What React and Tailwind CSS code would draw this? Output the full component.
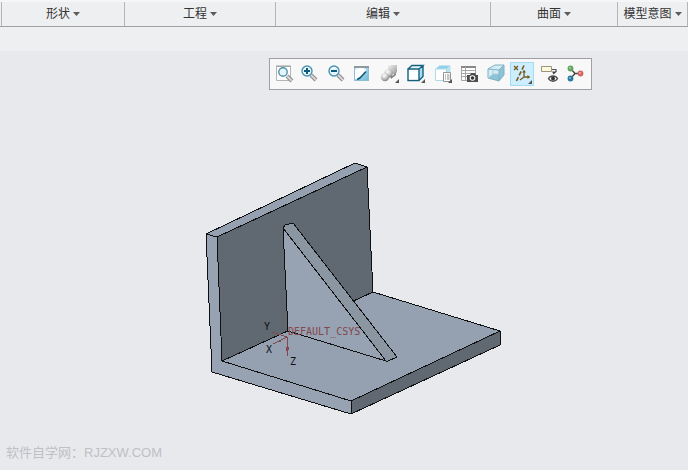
import React, { useState } from 'react';

const MENUS = ['形状', '工程', '编辑', '曲面', '模型意图'];

const Corner = () => <path d="M21 17v4h-4z" fill="#555" />;

const Lens = ({ x = 9, y = 9, r = 5, children }) => (
  <>
    <path d={`M${x + 4} ${y + 4}L${x + 9} ${y + 9}`} stroke="#8c8c8c" strokeWidth="4" />
    <path d={`M${x + 4} ${y + 4}L${x + 9} ${y + 9}`} stroke="#d6d6d6" strokeWidth="2" />
    <circle cx={x} cy={y} r={r} fill="#e6f6fc" stroke="#4a93b0" strokeWidth="1.4" />
    {children}
  </>
);

const RefitIcon = () => (
  <>
    <path d="M4.5 4.5h14v14h-14z" fill="#fff" stroke="#b4b4b4" />
    <path d="M4 4h15" stroke="#999" />
    <Lens x={11} y={10} r={4.2} />
  </>
);

const ZoomInIcon = () => (
  <Lens x={9} y={9}>
    <path d="M6 9h6M9 6v6" stroke="#0d5a7c" strokeWidth="2" />
  </Lens>
);

const ZoomOutIcon = () => (
  <Lens x={9} y={9}>
    <path d="M6 9h6" stroke="#0d5a7c" strokeWidth="2" />
  </Lens>
);

const RepaintIcon = () => (
  <>
    <defs>
      <linearGradient id="repaint" x1="0" y1="0" x2="1" y2="1">
        <stop offset="0" stopColor="#d9f0f8" />
        <stop offset="1" stopColor="#6fb9d6" />
      </linearGradient>
    </defs>
    <path d="M3 4h15v15H3z" fill="url(#repaint)" />
    <path d="M4 8c4-3 9-3 11 0v2c-2 4-5 6-8 7H4z" fill="#fff" />
    <path d="M3 4h15v2H3z" fill="#8d999f" />
    <path d="M3.5 6v12.5h14V6" fill="none" stroke="#8fbfd1" />
    <path d="M6 17.5c4-1 5-4 9-8" fill="none" stroke="#0d5a7c" strokeWidth="1.7" />
  </>
);

const ShadingIcon = () => (
  <>
    <defs>
      <radialGradient id="ball" cx=".4" cy=".3" r=".7">
        <stop offset="0" stopColor="#fff" />
        <stop offset=".5" stopColor="#cfcfcf" />
        <stop offset="1" stopColor="#868686" />
      </radialGradient>
      <linearGradient id="block" x1="0" y1="0" x2="1" y2="1">
        <stop offset="0" stopColor="#f2f2f2" />
        <stop offset="1" stopColor="#9a9a9a" />
      </linearGradient>
    </defs>
    <path d="M10 4l3-1h6v7l-2 2h-7z" fill="url(#block)" />
    <circle cx="10.5" cy="11.5" r="4.2" fill="url(#ball)" />
    <path d="M12 14c3 0 5-2 6-4v3l-5 4z" fill="#858585" />
    <circle cx="7" cy="15" r="4.2" fill="url(#ball)" />
    <Corner />
  </>
);

const DisplayStyleIcon = () => (
  <>
    <path d="M4 7l4-3.5h11L15 7z" fill="#eaf8fd" />
    <path d="M15 7l4-3.5v11L15 18.5z" fill="#a9dcee" />
    <path d="M4 7h11v11.5H4zM4 7l4-3.5h11L15 7M19 3.5v11l-4 4" fill="none" stroke="#14607f" strokeWidth="1.4" />
    <path d="M5 8h9v9.5H5z" fill="#fdfeff" />
    <Corner />
  </>
);

const SavedViewsIcon = () => (
  <>
    <path d="M4.5 7l4-3.5h11l-4 3.5z" fill="#8fd1e9" />
    <path d="M15.5 7l4-3.5v11l-4 4z" fill="#b9e2f0" />
    <path d="M4.5 7h11v11.5h-11z" fill="#fff" stroke="#aedae9" />
    <path d="M12.5 10.5h7v9h-7z" fill="#fff" stroke="#959595" />
    <path d="M14 13h1m1 0h2.5M14 15h1m1 0h2.5M14 17h1m1 0h2.5" stroke="#888" />
    <Corner />
  </>
);

const ViewManagerIcon = () => (
  <>
    <path d="M4.5 4.5h14v14h-14z" fill="#fff" stroke="#a5a5a5" />
    <path d="M4 5h15" stroke="#888" strokeWidth="2" />
    <path d="M5 8.5h13M5 11.5h13M5 14.5h13M8.5 5v13" stroke="#a5a5a5" />
    <path d="M10 13h3l1-2h4l1 2h2v7H10z" fill="#4d4d4d" />
    <circle cx="15.5" cy="16" r="2.8" fill="#fff" />
    <circle cx="15.5" cy="16" r="1.8" fill="#333" />
  </>
);

const PerspectiveIcon = () => (
  <>
    <path d="M4 7l7-4h9v10l-5 6-11-3z" fill="#d7edf5" />
    <path d="M15 8l5-5v10l-5 6z" fill="#8cc3d6" />
    <path d="M4 16l5-4h6v7z" fill="#8cc3d6" />
    <path d="M4 7l11 1v11L4 16zM4 7l7-4h9l-5 5M20 3v10l-5 6" fill="none" stroke="#7fb2c4" />
    <path d="M4 16l5-4h6M9 7.500V12" fill="none" stroke="#a9cfdc" />
  </>
);

const DatumIcon = () => (
  <>
    <path d="M4 4l4 4M8 4l-4 4" stroke="#7b5b1d" strokeWidth="1.4" />
    <path d="M14 3.500L6.500 19" stroke="#7b5b1d" strokeWidth="1.600" strokeDasharray="4.500 2" />
    <path d="M14 8.500V15h5.500M14 15l-4 3" fill="none" stroke="#7b5b1d" strokeWidth="1.300" />
    <path d="M12 10.500l2-2.500 2 2.500zM17.500 13l2.500 2-2.500 2z" fill="#7b5b1d" />
    <path d="M22 18v4h-4z" fill="#555" />
  </>
);

const AnnotationIcon = () => (
  <>
    <path d="M4.5 4.5h10v5h-10z" fill="#fff9df" stroke="#9b9477" />
    <path d="M15 7.500h4V10" fill="none" stroke="#555" strokeWidth="1.200" />
    <path d="M15 9.500h5l-3.500 3z" fill="#444" />
    <path d="M11.500 16.500c2-3.500 7-3.500 9 0-2 3.500-7 3.500-9 0z" fill="#fff" stroke="#4b4b4b" strokeWidth="1.500" />
    <circle cx="16" cy="16.500" r="2" fill="#333" />
  </>
);

const SpinCenterIcon = () => (
  <>
    <path d="M8 7l4 4.500h5M12 11.500L8 16" fill="none" stroke="#444" strokeWidth="1.300" />
    <circle cx="7.500" cy="6.500" r="2.900" fill="#62a45f" />
    <circle cx="7" cy="6" r="1" fill="#abd3a5" />
    <circle cx="7.500" cy="16.500" r="2.900" fill="#28799b" />
    <circle cx="7" cy="16" r="1" fill="#7dbcd2" />
    <circle cx="17.500" cy="11.500" r="2.900" fill="#d16560" />
    <circle cx="17" cy="11" r="1" fill="#f0b1aa" />
  </>
);

const TOOLS = [
  { label: '重新调整', Icon: RefitIcon },
  { label: '放大', Icon: ZoomInIcon },
  { label: '缩小', Icon: ZoomOutIcon },
  { label: '重画', Icon: RepaintIcon },
  { label: '渲染', Icon: ShadingIcon },
  { label: '显示样式', Icon: DisplayStyleIcon },
  { label: '已保存方向', Icon: SavedViewsIcon },
  { label: '视图管理器', Icon: ViewManagerIcon },
  { label: '透视图', Icon: PerspectiveIcon },
  { label: '基准显示', Icon: DatumIcon },
  { label: '注释显示', Icon: AnnotationIcon },
  { label: '旋转中心', Icon: SpinCenterIcon },
];

const MenuBar = () => (
  <nav className="grid h-[27px] grid-cols-[123fr_151fr_215fr_127fr_71fr] border-t-2 border-b border-t-[#f5f6f8] border-b-[#a0a1a4] pl-px">
    {MENUS.map((name) => (
      <button
        key={name}
        className="flex items-center justify-center gap-[3px] border-l border-[#b4b5b8] text-xs whitespace-nowrap last:border-r"
      >
        {name}
        <svg width="7" height="4" viewBox="0 0 7 4" aria-hidden="true">
          <path d="M0 0h7L3.5 4z" fill="#5c5c5c" />
        </svg>
      </button>
    ))}
  </nav>
);

const ViewToolbar = () => {
  const [active, setActive] = useState('基准显示');

  return (
    <div className="flex w-[323px] justify-between border border-[#9fa0a3] bg-[#f8f8f8] py-[3px] pr-1 pl-[2px]">
      {TOOLS.map(({ label, Icon }) => (
        <button
          key={label}
          aria-label={label}
          onClick={() => setActive(label)}
          className={`size-6 ${active === label ? 'bg-[#cceeff] outline outline-1 -outline-offset-1 outline-[#a5dbf5]' : ''}`}
        >
          <svg width="24" height="24" viewBox="0 0 24 24" fill="none" aria-hidden="true">
            <Icon />
          </svg>
        </button>
      ))}
    </div>
  );
};

// Angle bracket with a triangular rib
const Model = () => (
  <svg width="306" height="262" viewBox="200 158 306 262" className="shrink-0">
    <g stroke="#101010" strokeLinejoin="round" shapeRendering="crispEdges">
      <path d="M206 234L355 163L367 167L217 237z" fill="#95a0b0" />
      <path d="M217 237L367 167L373 292L222 361z" fill="#606871" />
      <path d="M222 361L373 292L500 331L351 401z" fill="#95a0b0" />
      <path d="M351 401L500 331V345L351 414z" fill="#606871" />
      <path d="M206 234L217 237L222 361L351 401V414L212 372z" fill="#97a3b2" />
      <path d="M283 228L288 331L386 361z" fill="#97a3b2" />
      <path d="M283 228L285 225L293 223L397 357L388 361H386z" fill="#8a96a2" />
    </g>
    <g stroke="#84474d" shapeRendering="crispEdges">
      <path d="M287 337L272 332M287 337L273 344M287 337V356" />
      <path d="M277 341l4 1M286 347v4M288 347v3" />
    </g>
    <g className="font-['DejaVu_Sans_Mono',monospace] text-[10px]">
      <text x="288" y="335" fill="#84474d">DEFAULT_CSYS</text>
      <g fill="#101010">
        <text x="264" y="330">Y</text>
        <text x="266" y="353">X</text>
        <text x="290" y="365">Z</text>
      </g>
    </g>
  </svg>
);

export default function App() {
  return (
    <div className="flex min-h-screen flex-col bg-[#e8e9ed] font-['Liberation_Sans','Noto_Sans_CJK_SC',sans-serif] text-[#333]">
      <header className="h-[51px] bg-[#eeeff1]">
        <MenuBar />
      </header>
      <main className="flex flex-1 flex-col pt-[7px]">
        <div className="flex justify-center pl-[173px]">
          <ViewToolbar />
        </div>
        <div className="mt-[68px] flex justify-center pl-[18px]">
          <Model />
        </div>
        <p className="mt-[23px] px-[6px] text-[13px] leading-5 text-[#bfc0c3]">软件自学网：RJZXW.COM</p>
      </main>
    </div>
  );
}
